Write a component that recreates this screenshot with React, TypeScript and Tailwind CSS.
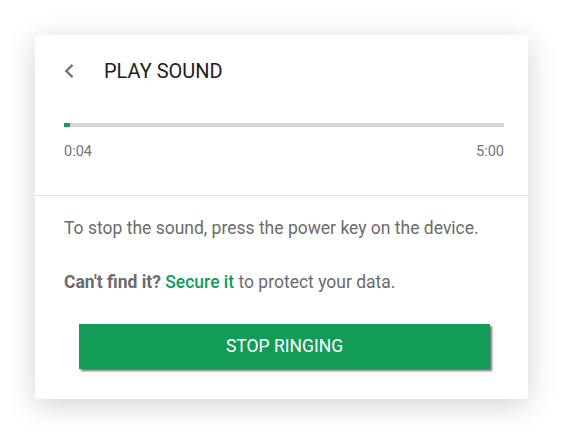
import React from "react";

export default function App() {
  return (
    <div
      className="w-[562px] h-[435px] bg-white pl-[35px] pt-[35px]"
      style={{ fontFamily: "Roboto, 'Noto Sans', sans-serif" }}
    >
      <div className="w-[493px] h-[364px] bg-white shadow-[0_6px_28px_rgba(0,0,0,0.18)] flex flex-col">
        <div className="pl-[29px] pr-[24px]">
          <div className="h-[72px] flex items-center">
            <svg width="12" height="16" viewBox="0 0 12 16" className="ml-[-1px]">
              <path d="M9.5 1.8 L3.3 8 L9.5 14.2" fill="none" stroke="#757575" strokeWidth="2.4" />
            </svg>
            <span className="ml-[29px] text-[20px] leading-[24px] text-[#212121]">PLAY SOUND</span>
          </div>
          <div className="mt-[16px] h-[4px] bg-[#d6d6d6] relative">
            <div className="h-[4px] w-[6px] bg-[#0f9d58]" />
          </div>
          <div className="mt-[15px] flex justify-between text-[14.5px] leading-[20px] text-[#757575]">
            <span>0:04</span>
            <span>5:00</span>
          </div>
        </div>
        <div className="mt-[33px] h-px bg-[#e0e0e0]" />
        <div className="pl-[29px] pr-[24px]">
          <p className="mt-[20px] text-[17.5px] leading-[24px] text-[#6b6b6b]">
            To stop the sound, press the power key on the device.
          </p>
          <p className="mt-[30px] text-[17.5px] leading-[24px] text-[#6b6b6b]">
            <span className="font-bold">Can't find it?</span>{" "}
            <span className="font-medium text-[#0f9d58]">Secure it</span> to protect your data.
          </p>
        </div>
        <div className="pl-[44px] mt-[30px]">
          <button className="w-[411px] h-[45px] bg-[#129c58] text-white text-[17.5px] shadow-[2px_2px_2px_rgba(0,0,0,0.55)]">
            STOP RINGING
          </button>
        </div>
      </div>
    </div>
  );
}
